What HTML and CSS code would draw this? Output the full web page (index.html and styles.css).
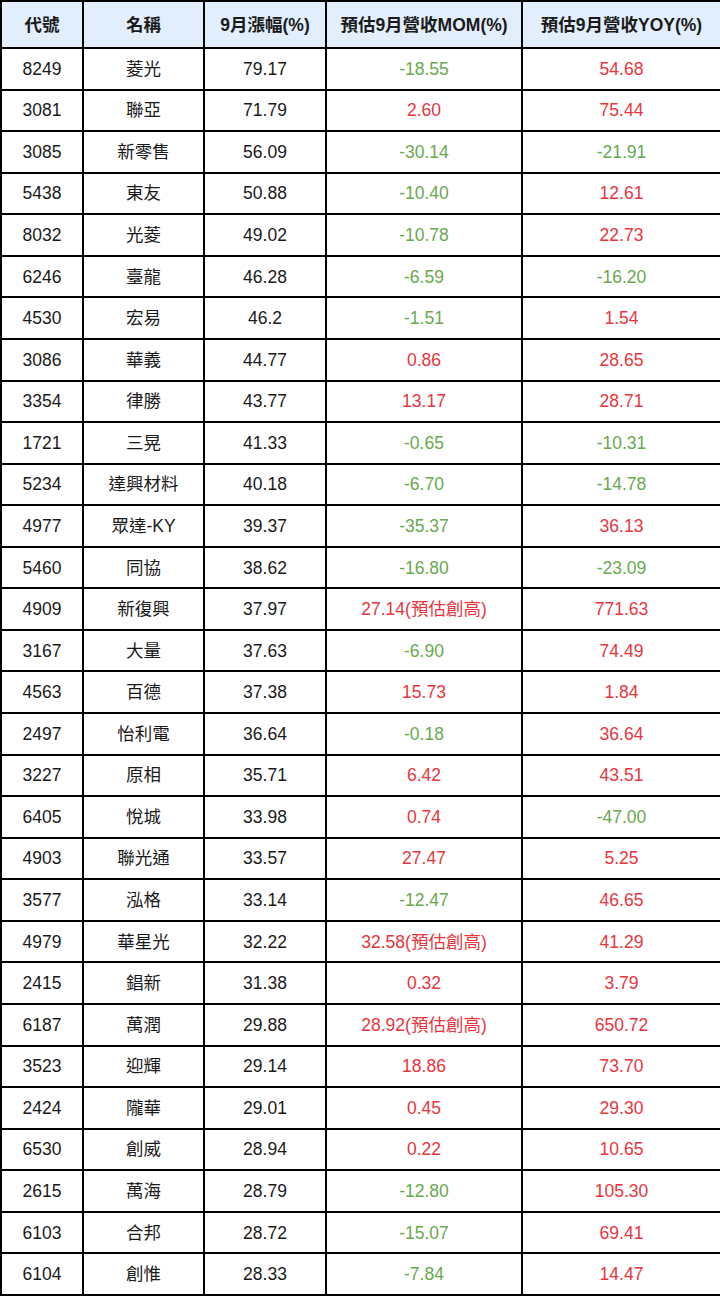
FILE: index.html
```html
<!DOCTYPE html>
<html lang="zh-Hant">
<head>
<meta charset="utf-8">
<link rel="stylesheet" href="styles.css">
</head>
<body>
<table class="tbl">
<colgroup><col class="c1"><col class="c2"><col class="c3"><col class="c4"><col class="c5"></colgroup>
<thead>
<tr><th>代號</th><th>名稱</th><th>9月漲幅(%)</th><th>預估9月營收MOM(%)</th><th>預估9月營收YOY(%)</th></tr>
</thead>
<tbody>
<tr><td>8249</td><td>菱光</td><td>79.17</td><td class="g">-18.55</td><td class="r">54.68</td></tr>
<tr><td>3081</td><td>聯亞</td><td>71.79</td><td class="r">2.60</td><td class="r">75.44</td></tr>
<tr><td>3085</td><td>新零售</td><td>56.09</td><td class="g">-30.14</td><td class="g">-21.91</td></tr>
<tr><td>5438</td><td>東友</td><td>50.88</td><td class="g">-10.40</td><td class="r">12.61</td></tr>
<tr><td>8032</td><td>光菱</td><td>49.02</td><td class="g">-10.78</td><td class="r">22.73</td></tr>
<tr><td>6246</td><td>臺龍</td><td>46.28</td><td class="g">-6.59</td><td class="g">-16.20</td></tr>
<tr><td>4530</td><td>宏易</td><td>46.2</td><td class="g">-1.51</td><td class="r">1.54</td></tr>
<tr><td>3086</td><td>華義</td><td>44.77</td><td class="r">0.86</td><td class="r">28.65</td></tr>
<tr><td>3354</td><td>律勝</td><td>43.77</td><td class="r">13.17</td><td class="r">28.71</td></tr>
<tr><td>1721</td><td>三晃</td><td>41.33</td><td class="g">-0.65</td><td class="g">-10.31</td></tr>
<tr><td>5234</td><td>達興材料</td><td>40.18</td><td class="g">-6.70</td><td class="g">-14.78</td></tr>
<tr><td>4977</td><td>眾達-KY</td><td>39.37</td><td class="g">-35.37</td><td class="r">36.13</td></tr>
<tr><td>5460</td><td>同協</td><td>38.62</td><td class="g">-16.80</td><td class="g">-23.09</td></tr>
<tr><td>4909</td><td>新復興</td><td>37.97</td><td class="r">27.14(預估創高)</td><td class="r">771.63</td></tr>
<tr><td>3167</td><td>大量</td><td>37.63</td><td class="g">-6.90</td><td class="r">74.49</td></tr>
<tr><td>4563</td><td>百德</td><td>37.38</td><td class="r">15.73</td><td class="r">1.84</td></tr>
<tr><td>2497</td><td>怡利電</td><td>36.64</td><td class="g">-0.18</td><td class="r">36.64</td></tr>
<tr><td>3227</td><td>原相</td><td>35.71</td><td class="r">6.42</td><td class="r">43.51</td></tr>
<tr><td>6405</td><td>悅城</td><td>33.98</td><td class="r">0.74</td><td class="g">-47.00</td></tr>
<tr><td>4903</td><td>聯光通</td><td>33.57</td><td class="r">27.47</td><td class="r">5.25</td></tr>
<tr><td>3577</td><td>泓格</td><td>33.14</td><td class="g">-12.47</td><td class="r">46.65</td></tr>
<tr><td>4979</td><td>華星光</td><td>32.22</td><td class="r">32.58(預估創高)</td><td class="r">41.29</td></tr>
<tr><td>2415</td><td>錩新</td><td>31.38</td><td class="r">0.32</td><td class="r">3.79</td></tr>
<tr><td>6187</td><td>萬潤</td><td>29.88</td><td class="r">28.92(預估創高)</td><td class="r">650.72</td></tr>
<tr><td>3523</td><td>迎輝</td><td>29.14</td><td class="r">18.86</td><td class="r">73.70</td></tr>
<tr><td>2424</td><td>隴華</td><td>29.01</td><td class="r">0.45</td><td class="r">29.30</td></tr>
<tr><td>6530</td><td>創威</td><td>28.94</td><td class="r">0.22</td><td class="r">10.65</td></tr>
<tr><td>2615</td><td>萬海</td><td>28.79</td><td class="g">-12.80</td><td class="r">105.30</td></tr>
<tr><td>6103</td><td>合邦</td><td>28.72</td><td class="g">-15.07</td><td class="r">69.41</td></tr>
<tr><td>6104</td><td>創惟</td><td>28.33</td><td class="g">-7.84</td><td class="r">14.47</td></tr>
</tbody>
</table>
</body>
</html>
```
FILE: styles.css
```css
html, body {
  margin: 0;
  padding: 0;
  background: #ffffff;
}
.tbl {
  width: 720px;
  border-collapse: collapse;
  table-layout: fixed;
  font-family: "Liberation Sans", Arial, "Noto Sans CJK TC", sans-serif;
  font-size: 17.5px;
  line-height: 20px;
  color: #1a1a1a;
}
.c1 { width: 82px; }
.c2 { width: 121px; }
.c3 { width: 122px; }
.c4 { width: 196px; }
.c5 { width: 199px; }
.tbl th, .tbl td {
  border: 2px solid #000;
  text-align: center;
  vertical-align: middle;
  padding: 0;
  white-space: nowrap;
}
.tbl th {
  background: #e3eefc;
  font-weight: bold;
  font-size: 17.5px;
  height: 45px;
}
.tbl td {
  height: 39.57px;
}
.g { color: #6aa84f; }
.r { color: #e8363c; }
```
